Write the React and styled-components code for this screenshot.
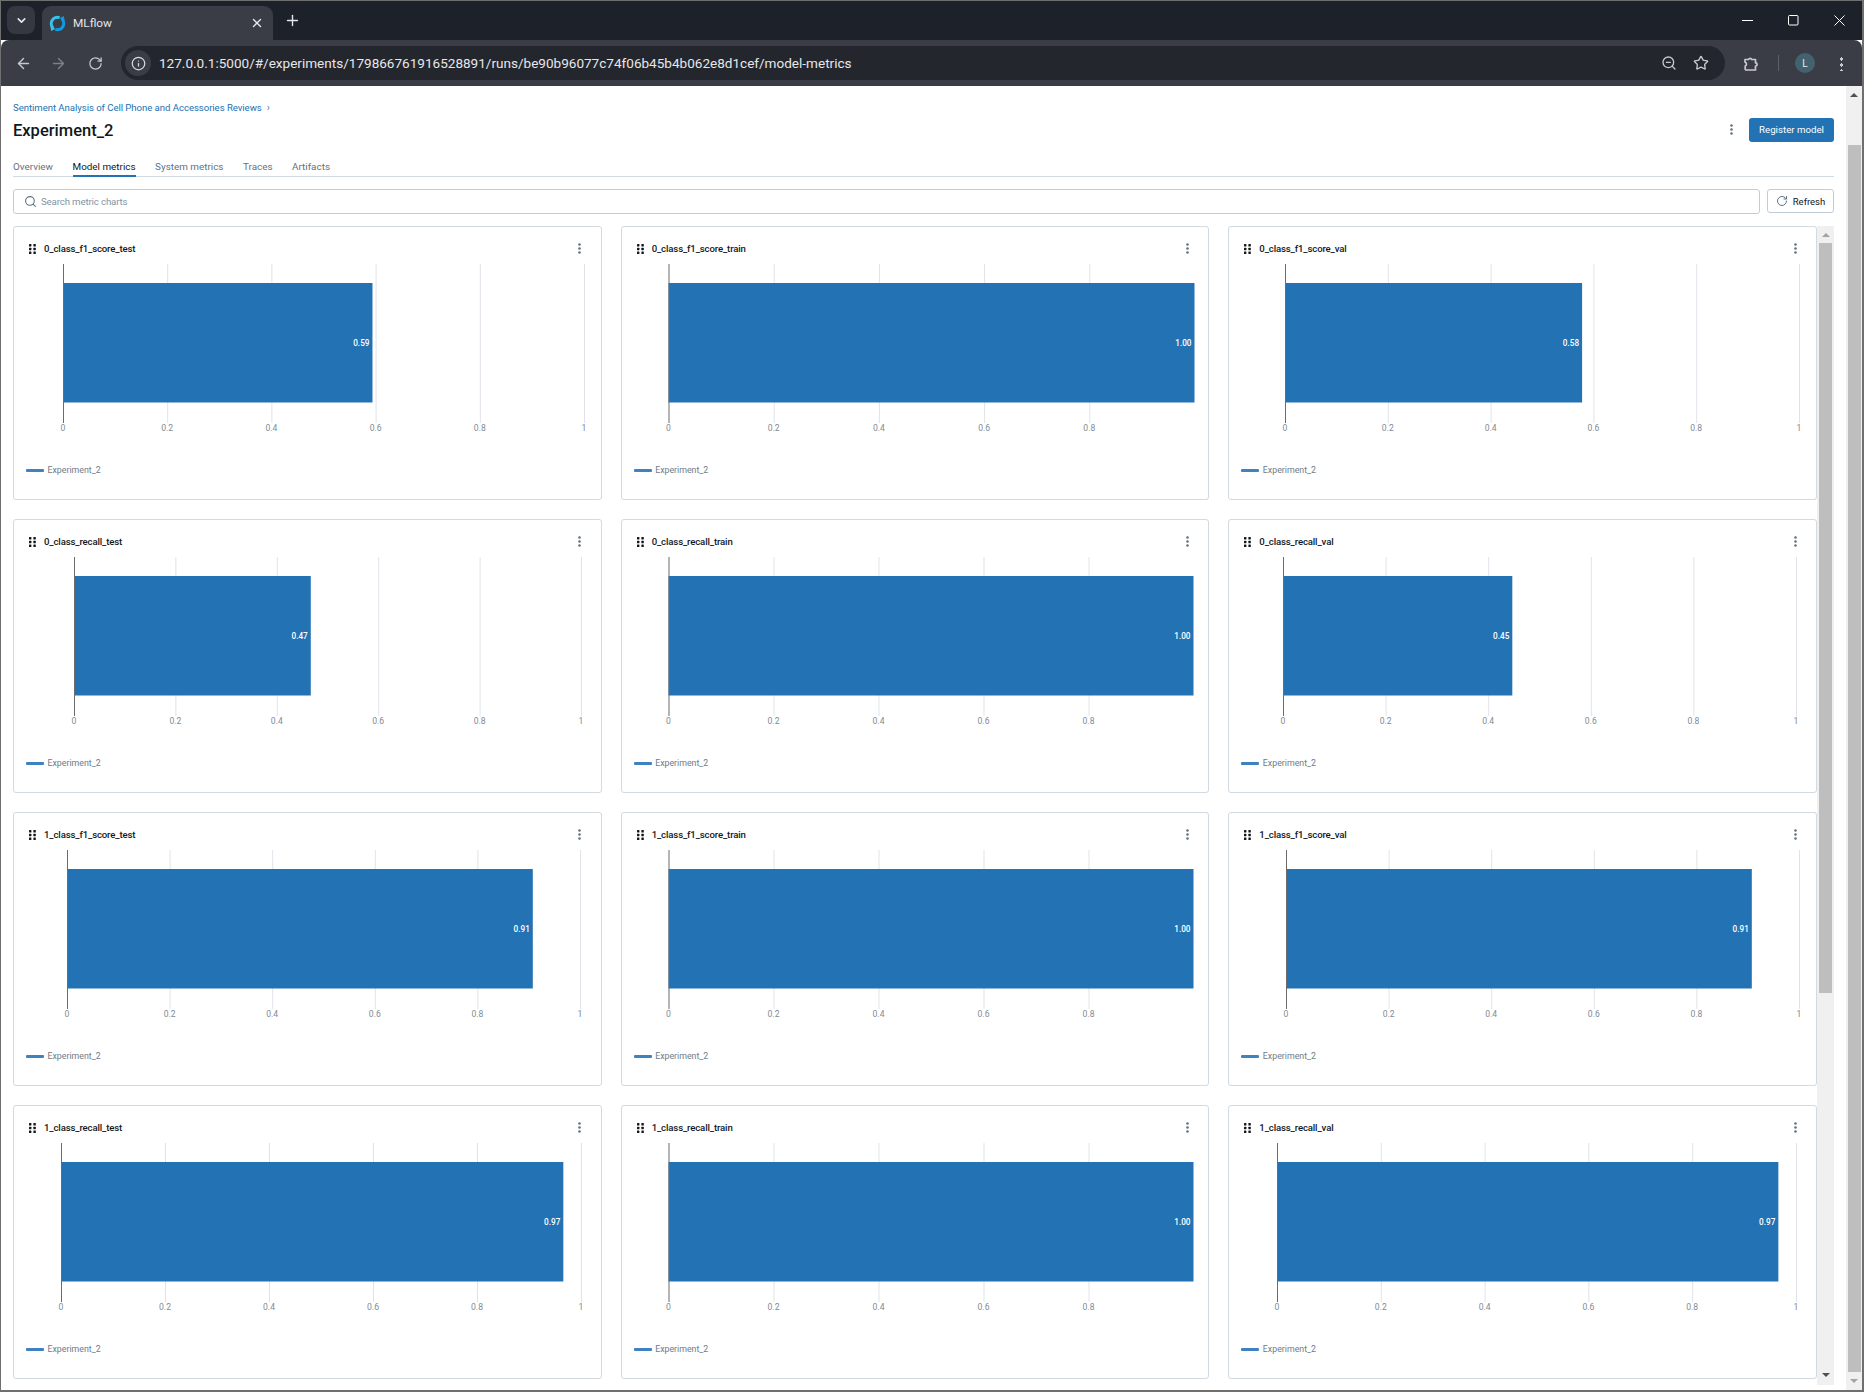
import React from "react";
import styled, { createGlobalStyle } from "styled-components";
import { ArrowLeft, ArrowRight, RotateCw, Info, ZoomOut, Star, X, Plus, ChevronDown, Search } from "lucide-react";

const UI = `Roboto, "Open Sans", "Liberation Sans", sans-serif`;

const Global = createGlobalStyle`
  html, body { margin: 0; padding: 0; background: #fff; overflow: hidden; }
  * { box-sizing: border-box; }
  body { font-family: ${UI}; }
`;

const Window = styled.div`
  width: 1864px; height: 1392px; display: flex; flex-direction: column;
  border: 1px solid #6f6f6f; border-width: 1px 2px 2px 1px; background: #fff; overflow: hidden;
`;
const TabStrip = styled.div`
  height: 39px; flex: none; background: #1d2129; display: flex; align-items: flex-start; padding: 5px 0 0 6px; gap: 7px;
`;
const TabMenu = styled.div`
  width: 28px; height: 28px; border-radius: 8px; background: #353840; color: #e4e6ea;
  display: flex; align-items: center; justify-content: center;
`;
const Tab = styled.div`
  width: 231px; height: 34px; background: #3a3d45; border-radius: 9px 9px 0 0; display: flex; align-items: center;
  padding: 0 9px 0 7px; color: #e4e6ea; font-size: 11.8px;
`;
const TabTitle = styled.span` flex: 1; margin-left: 7px; `;
const NewTab = styled.div` color: #e4e6ea; display: flex; margin: 6px 0 0 4px; `;
const WinControls = styled.div`
  margin-left: auto; display: flex; align-items: center; height: 28px; color: #fff;
`;
const WinBtn = styled.div`
  width: 46px; display: flex; justify-content: center; align-items: center;
`;
const Toolbar = styled.div`
  height: 46px; flex: none; background: #3a3d45; border-radius: 8px 8px 0 0; display: flex; align-items: center; padding: 0 0 0 5px; color: #c7c9ce;
`;
const NavBtn = styled.div`
  width: 35px; display: flex; justify-content: center; color: ${p => (p.$dim ? "#7d8087" : "#c7c9ce")};
  margin-left: ${p => p.$ml || 0}px;
`;
const Omnibox = styled.div`
  width: 1604px; height: 34px; margin-left: 8px; background: #23262d; border-radius: 17px; display: flex; align-items: center; padding: 0 0 0 4px; color: #e6e7ea;
`;
const InfoChip = styled.div`
  width: 26px; height: 26px; border-radius: 50%; background: #3a3d45; display: flex; align-items: center; justify-content: center; color: #d9dade;
`;
const Url = styled.div` margin-left: 8px; font-size: 13.55px; flex: 1; color: #e6e7ea; white-space: nowrap; `;
const UrlIcon = styled.div` display: flex; color: #c7c9ce; margin-right: ${p => p.$mr}px; `;
const ToolRight = styled.div` display: flex; align-items: center; margin-left: 18px; color: #c7c9ce; `;
const Sep = styled.div` width: 1px; height: 16px; background: #5c5f66; margin: 0 16px 0 19px; `;
const Avatar = styled.div`
  width: 20px; height: 20px; border-radius: 50%; background: #43626f; color: #e8edef; font-size: 10px;
  display: flex; align-items: center; justify-content: center;
`;
const Kebab3 = styled.div`
  width: 3px; height: 15px; margin-left: 25px;
  background: radial-gradient(circle, currentColor 1.5px, transparent 1.6px) 0 0 / 3px 6px repeat-y;
`;

const Body = styled.div` flex: 1; display: flex; min-height: 0; `;
const Main = styled.main` flex: 1; min-width: 0; padding: 0 12px 5px; display: flex; flex-direction: column; `;
const Breadcrumb = styled.div`
  margin-top: 14px; height: 15px; line-height: 15px; font-size: 9.6px; letter-spacing: -0.05px; color: #2272b4; display: flex; align-items: center; gap: 5px;
`;
const Crumb = styled.span` color: #5f7281; font-size: 10px; `;
const HeadRow = styled.div` display: flex; align-items: center; height: 27px; margin-top: 1px; `;
const PageTitle = styled.h1` margin: 2px 0 0; font-size: 16.5px; font-weight: 500; color: #11171c; flex: 1; `;
const HeadKebab = styled.div` color: #5f7281; display: flex; margin-right: 16px; `;
const Primary = styled.div`
  width: 85px; height: 24px; border-radius: 3px; background: #2272b4; color: #fff; font-size: 9.7px;
  display: flex; align-items: center; justify-content: center;
`;
const Tabs = styled.div`
  display: flex; gap: 19.5px; height: 32px; margin-top: 2px; border-bottom: 1px solid #d1d9e1; font-size: 9.9px; color: #5f7281;
`;
const TabLink = styled.div`
  height: 32px; line-height: 26px; padding-top: 9px; color: ${p => (p.$on ? "#11171c" : "#5f7281")};
  border-bottom: 2px solid ${p => (p.$on ? "#2272b4" : "transparent")}; white-space: nowrap;
`;
const SearchRow = styled.div` display: flex; gap: 7px; margin-top: 12px; `;
const SearchBox = styled.div`
  flex: 1; height: 25px; border: 1px solid #c0cdd8; border-radius: 3px; display: flex; align-items: center; padding-left: 10px; gap: 4px;
  color: #8396a5; font-size: 9.7px; letter-spacing: -0.15px;
`;
const RefreshBtn = styled.div`
  width: 67px; height: 24px; border: 1px solid #c0cdd8; border-radius: 3px; display: flex; align-items: center; justify-content: center; gap: 5px;
  color: #11171c; font-size: 9.5px;
`;
const RefreshIcon = styled.span` display: flex; color: #5f7281; `;
const ChartArea = styled.div` display: flex; margin-top: 12px; flex: 1; min-height: 0; `;
const Grid = styled.div`
  flex: 1; display: grid; grid-template-columns: repeat(3, 1fr); grid-auto-rows: 274px; gap: 19px; align-content: start;
`;
const Card = styled.section`
  border: 1px solid #d1d9e1; border-radius: 3px; background: #fff; display: flex; flex-direction: column; overflow: hidden;
`;
const CardHead = styled.div` height: 36px; flex: none; display: flex; align-items: center; padding: 7px 19.5px 0 15px; `;
const CardTitle = styled.div` flex: 1; margin-left: 8px; font-size: 9.6px; letter-spacing: -0.14px; font-weight: 500; color: #11171c; white-space: nowrap; `;
const CardKebab = styled.div` color: #5f7281; display: flex; `;
const ChartSvg = styled.svg` display: block; width: 100%; height: 184px; flex: none; `;
const Legend = styled.div`
  display: flex; align-items: center; gap: 3.5px; padding-left: 12px; margin-top: 13px; font-size: 8.8px; color: #6f7c88; height: 20px;
`;
const LegendLine = styled.span` width: 18px; height: 3px; border-radius: 1px; background: #3f82bf; `;

const ScrollTrack = styled.div`
  width: ${p => p.$w}px; flex: none; background: #f0f0f0; display: flex; flex-direction: column; align-items: center;
`;
const Arrow = styled.div`
  width: 0; height: 0; flex: none; margin: ${p => p.$m};
  border-left: 4px solid transparent; border-right: 4px solid transparent;
  ${p => (p.$down ? `border-top: 4px solid ${p.$c};` : `border-bottom: 4px solid ${p.$c};`)}
`;
const Thumb = styled.div`
  width: 13px; background: #bebebe; flex: none; height: ${p => p.$h}px; margin-top: ${p => p.$t}px;
`;
const Spacer = styled.div` flex: 1; `;

const Dots = () => (
  <svg width="7" height="10" viewBox="0 0 7 10" fill="#11171c">
    {[0, 3.8, 7.6].map(y => [0, 4.4].map(x => <rect key={`${x}${y}`} x={x} y={y} width="2.4" height="2.4" rx=".5" />))}
  </svg>
);
const VDots = () => (
  <svg width="3" height="11" viewBox="0 0 3 11" fill="currentColor">
    <circle cx="1.5" cy="1.5" r="1.3" /><circle cx="1.5" cy="5.5" r="1.3" /><circle cx="1.5" cy="9.5" r="1.3" />
  </svg>
);
const Logo = () => (
  <svg width="17" height="17" viewBox="0 0 17 17" fill="none" strokeWidth="3">
    <path d="M10.600 2.600A6.300 6.300 0 0 0 4.300 13.200" stroke="#3cc0ea" />
    <path d="M6.400 14.400A6.300 6.300 0 0 0 12.700 3.800" stroke="#0f9be3" />
    <path d="M1.300 11.300l1 4.700 4.200-2.300z" fill="#3cc0ea" />
    <path d="M15.700 5.700l-1-4.700-4.200 2.300z" fill="#0f9be3" />
  </svg>
);
const Extension = () => (
  <svg width="16" height="17" viewBox="0 0 16 17" fill="none" stroke="currentColor" strokeWidth="1.700" strokeLinejoin="round">
    <path d="M2 4.500h3.500a1.700 1.700 0 0 1 3.200 0h3.800v3.300a1.600 1.600 0 0 1 0 3.200v4H3.200a1 1 0 0 1-1-1v-3a2 2 0 0 0 1.300-1.900 2 2 0 0 0-1.500-2z" />
  </svg>
);

const TICKS = [0, 0.2, 0.4, 0.6, 0.8, 1];
const Y = { top: 1, barTop: 20, barBot: 139.5, axis: 160, label: 167.5 };

function Chart({ x0, x1, v, label, end }) {
  const sx = x => x0 + (x1 - x0) * x;
  const right = sx(v);
  const ticks = end ? TICKS.slice(0, 5) : TICKS;
  return (
    <ChartSvg>
      {ticks.slice(1).map(t => (
        <line key={t} x1={sx(t) + 0.5} x2={sx(t) + 0.5} y1={Y.top} y2={Y.axis} stroke="#dfe3e8" />
      ))}
      <rect x={x0} y={Y.barTop} width={right - x0} height={Y.barBot - Y.barTop} fill="#2272b4" />
      <line x1={x0 + 0.5} x2={x0 + 0.5} y1={Y.top} y2={Y.axis} stroke="#6b6b6b" />
      {ticks.map(t => (
        <text key={t} x={sx(t)} y={Y.label} textAnchor="middle" fontSize="8.6" fill="#7f8a95" fontFamily={UI}>{t}</text>
      ))}
      <text x={right - 3} y={(Y.barTop + Y.barBot) / 2 + 3} textAnchor="end" fontSize="8.2" fontWeight="500" fill="#fff" fontFamily={UI}>{label}</text>
    </ChartSvg>
  );
}

const CHARTS = [
  { n: "0_class_f1_score_test", x0: 49, x1: 570, v: 0.594, l: "0.59" },
  { n: "0_class_f1_score_train", x0: 46.5, x1: 572.5, v: 1, l: "1.00", end: true },
  { n: "0_class_f1_score_val", x0: 56, x1: 570, v: 0.578, l: "0.58" },
  { n: "0_class_recall_test", x0: 60, x1: 567, v: 0.467, l: "0.47" },
  { n: "0_class_recall_train", x0: 46.5, x1: 571.5, v: 1, l: "1.00", end: true },
  { n: "0_class_recall_val", x0: 54, x1: 567, v: 0.447, l: "0.45" },
  { n: "1_class_f1_score_test", x0: 53, x1: 566, v: 0.908, l: "0.91" },
  { n: "1_class_f1_score_train", x0: 46.5, x1: 571.5, v: 1, l: "1.00", end: true },
  { n: "1_class_f1_score_val", x0: 57, x1: 570, v: 0.908, l: "0.91" },
  { n: "1_class_recall_test", x0: 47, x1: 567, v: 0.966, l: "0.97" },
  { n: "1_class_recall_train", x0: 46.5, x1: 571.5, v: 1, l: "1.00", end: true },
  { n: "1_class_recall_val", x0: 48, x1: 567, v: 0.966, l: "0.97" },
];

export default function App() {
  return (
    <Window>
      <Global />
      <TabStrip>
        <TabMenu><ChevronDown size={13} strokeWidth={3} /></TabMenu>
        <Tab>
          <Logo />
          <TabTitle>MLflow</TabTitle>
          <X size={14} strokeWidth={2.4} />
        </Tab>
        <NewTab><Plus size={17} strokeWidth={2} /></NewTab>
        <WinControls>
          <WinBtn><svg width="11" height="11" viewBox="0 0 11 11" stroke="#fff"><path d="M0 5.5h11" /></svg></WinBtn>
          <WinBtn><svg width="11" height="11" viewBox="0 0 11 11" fill="none" stroke="#fff"><rect x=".5" y=".5" width="9.5" height="9.5" rx="1" /></svg></WinBtn>
          <WinBtn><svg width="11" height="11" viewBox="0 0 11 11" stroke="#fff"><path d="M.5.5l10 10M10.500.5l-10 10" /></svg></WinBtn>
        </WinControls>
      </TabStrip>
      <Toolbar>
        <NavBtn><ArrowLeft size={17} /></NavBtn>
        <NavBtn $dim><ArrowRight size={17} /></NavBtn>
        <NavBtn $ml={2}><RotateCw size={15} /></NavBtn>
        <Omnibox>
          <InfoChip><Info size={15} /></InfoChip>
          <Url>127.0.0.1:5000/#/experiments/179866761916528891/runs/be90b96077c74f06b45b4b062e8d1cef/model-metrics</Url>
          <UrlIcon $mr={16}><ZoomOut size={16} /></UrlIcon>
          <UrlIcon $mr={16}><Star size={16} /></UrlIcon>
        </Omnibox>
        <ToolRight>
          <Extension />
          <Sep />
          <Avatar>L</Avatar>
          <Kebab3 />
        </ToolRight>
      </Toolbar>
      <Body>
        <Main>
          <Breadcrumb>Sentiment Analysis of Cell Phone and Accessories Reviews <Crumb>›</Crumb></Breadcrumb>
          <HeadRow>
            <PageTitle>Experiment_2</PageTitle>
            <HeadKebab><VDots /></HeadKebab>
            <Primary>Register model</Primary>
          </HeadRow>
          <Tabs>
            <TabLink>Overview</TabLink>
            <TabLink $on>Model metrics</TabLink>
            <TabLink>System metrics</TabLink>
            <TabLink>Traces</TabLink>
            <TabLink>Artifacts</TabLink>
          </Tabs>
          <SearchRow>
            <SearchBox><Search size={13} color="#5f7281" />Search metric charts</SearchBox>
            <RefreshBtn><RefreshIcon><RotateCw size={12} /></RefreshIcon>Refresh</RefreshBtn>
          </SearchRow>
          <ChartArea>
            <Grid>
              {CHARTS.map(c => (
                <Card key={c.n}>
                  <CardHead>
                    <Dots />
                    <CardTitle>{c.n}</CardTitle>
                    <CardKebab><VDots /></CardKebab>
                  </CardHead>
                  <Chart x0={c.x0} x1={c.x1} v={c.v} label={c.l} end={c.end} />
                  <Legend><LegendLine />Experiment_2</Legend>
                </Card>
              ))}
            </Grid>
            <ScrollTrack $w={17}>
              <Arrow $c="#a3a3a3" $m="7px 0 0" />
              <Thumb $h={750} $t={6} />
              <Spacer />
              <Arrow $down $c="#505050" $m="0 0 8px" />
            </ScrollTrack>
          </ChartArea>
        </Main>
        <ScrollTrack $w={16}>
          <Arrow $c="#505050" $m="7px 0 0" />
          <Thumb $h={1227} $t={48} />
          <Spacer />
          <Arrow $down $c="#a3a3a3" $m="0 0 7px" />
        </ScrollTrack>
      </Body>
    </Window>
  );
}
